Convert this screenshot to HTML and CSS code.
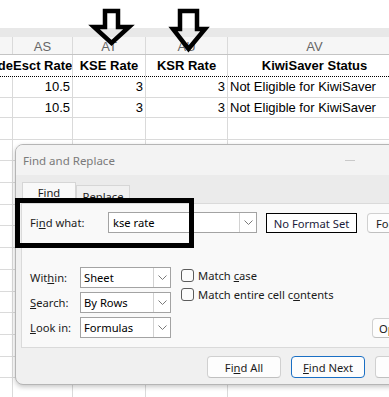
FILE: index.html
```html
<!DOCTYPE html>
<html lang="en">
<head>
    <meta charset="UTF-8">
    <meta name="viewport" content="width=device-width, initial-scale=1.0">
    <title>Find and Replace</title>
    <link rel="stylesheet" href="styles.css">
</head>
<body>
    <div class="sheet">
        <div class="band"></div>
        <div class="row letters">
            <span></span><span>AS</span><span>AT</span><span>AU</span><span>AV</span>
        </div>
        <div class="row head">
            <span class="right">de</span><span class="left">Esct Rate</span><span>KSE Rate</span><span>KSR Rate</span><span>KiwiSaver&nbsp;Status</span>
        </div>
        <div class="row data">
            <span></span><span class="num">10.5</span><span class="num">3</span><span class="num">3</span><span class="txt">Not Eligible for KiwiSaver</span>
        </div>
        <div class="row data">
            <span></span><span class="num">10.5</span><span class="num">3</span><span class="num">3</span><span class="txt">Not Eligible for KiwiSaver</span>
        </div>
        <div class="row empty"><span></span><span></span><span></span><span></span><span></span></div>
        <div class="row empty"><span></span><span></span><span></span><span></span><span></span></div>
        <div class="row empty"><span></span><span></span><span></span><span></span><span></span></div>
        <div class="row empty"><span></span><span></span><span></span><span></span><span></span></div>
        <div class="row empty"><span></span><span></span><span></span><span></span><span></span></div>
        <div class="row empty"><span></span><span></span><span></span><span></span><span></span></div>
        <div class="row empty"><span></span><span></span><span></span><span></span><span></span></div>
        <div class="row empty"><span></span><span></span><span></span><span></span><span></span></div>
        <div class="row empty"><span></span><span></span><span></span><span></span><span></span></div>
        <div class="row empty"><span></span><span></span><span></span><span></span><span></span></div>
        <div class="row empty"><span></span><span></span><span></span><span></span><span></span></div>
        <div class="row empty"><span></span><span></span><span></span><span></span><span></span></div>
        <div class="row empty"><span></span><span></span><span></span><span></span><span></span></div>
        <div class="row empty"><span></span><span></span><span></span><span></span><span></span></div>
    </div>

    <!-- hand drawn pointers over the header -->
    <svg class="arrows" width="389" height="60" viewBox="0 0 389 60">
        <path d="M105 11 H118 V27 H129 L111.5 43 L94 27 H105 Z" />
        <path d="M180 11 H197 V29 H205 L188.5 49 L173 29 H180 Z" />
    </svg>

    <div class="dialog">
        <div class="title">
            <span>Find and Replace</span>
            <span class="min"></span>
        </div>
        <div class="tabs">
            <span class="tab active">Find</span>
            <span class="tab">Replace</span>
        </div>
        <div class="panel">
            <div class="find-row">
                <label class="find-label">Fi<u>n</u>d what:</label>
                <div class="combo wide">
                    <span class="value">kse rate</span>
                    <span class="drop"><svg width="9" height="5" viewBox="0 0 9 5"><polyline points="0.5,0.5 4.5,4.5 8.5,0.5" /></svg></span>
                </div>
                <div class="format-box">No Format Set</div>
                <button class="btn format-btn">Format...</button>
            </div>
            <div class="options">
                <div class="selects">
                    <div class="opt-row">
                        <label>Wit<u>h</u>in:</label>
                        <div class="combo">
                            <span class="value">Sheet</span>
                            <span class="drop"><svg width="9" height="5" viewBox="0 0 9 5"><polyline points="0.5,0.5 4.5,4.5 8.5,0.5" /></svg></span>
                        </div>
                    </div>
                    <div class="opt-row">
                        <label><u>S</u>earch:</label>
                        <div class="combo">
                            <span class="value">By Rows</span>
                            <span class="drop"><svg width="9" height="5" viewBox="0 0 9 5"><polyline points="0.5,0.5 4.5,4.5 8.5,0.5" /></svg></span>
                        </div>
                    </div>
                    <div class="opt-row">
                        <label><u>L</u>ook in:</label>
                        <div class="combo">
                            <span class="value">Formulas</span>
                            <span class="drop"><svg width="9" height="5" viewBox="0 0 9 5"><polyline points="0.5,0.5 4.5,4.5 8.5,0.5" /></svg></span>
                        </div>
                    </div>
                </div>
                <div class="checks">
                    <div class="check"><span class="box"></span><span>Match <u>c</u>ase</span></div>
                    <div class="check"><span class="box"></span><span>Match entire cell c<u>o</u>ntents</span></div>
                </div>
                <div class="opt-btn">
                    <button class="btn">Options &lt;&lt;</button>
                </div>
            </div>
        </div>
        <div class="footer">
            <button class="btn">Fi<u>n</u>d All</button>
            <button class="btn primary"><u>F</u>ind Next</button>
            <button class="btn">Close</button>
        </div>
    </div>

    <div class="callout"></div>
</body>
</html>
```

FILE: styles.css
```css
body {
    margin: 0;
    width: 389px;
    height: 397px;
    overflow: hidden;
    position: relative;
    background-color: #ffffff;
    font-family: "Liberation Sans", Arial, sans-serif;
}
.sheet {
    padding-top: 28px;
}
.band {
    height: 9px;
    background-color: #e8e8e8;
}
.row {
    display: grid;
    grid-template-columns: 13px 60px 73px 82px 174px;
    box-sizing: border-box;
    border-bottom: 1px solid #dadada;
    font-size: 13px;
    color: #000;
}
.row span {
    border-right: 1px solid #dadada;
    white-space: nowrap;
    overflow: hidden;
    display: flex;
    align-items: center;
}
.letters {
    height: 18px;
    background-color: #f6f6f6;
    border-bottom-color: #c4c4c4;
    color: #666;
}
.letters span {
    justify-content: center;
    padding-top: 1px;
}
.head {
    height: 22px;
    font-weight: bold;
    border-bottom: 1px dotted #000;
}
.head span {
    justify-content: center;
}
.head span.right {
    justify-content: flex-end;
    border-right: none;
}
.head span.left {
    justify-content: flex-start;
}
.data {
    height: 20.5px;
}
.data .num {
    justify-content: flex-end;
    padding-right: 2px;
}
.data .txt {
    padding-left: 2px;
}
.empty {
    height: 21.7px;
}
.arrows {
    position: absolute;
    left: 0;
    top: 0;
}
.arrows path {
    fill: none;
    stroke: #000;
    stroke-width: 4.5;
    stroke-linejoin: miter;
}

/* dialog */
.dialog {
    position: absolute;
    left: 15px;
    top: 144px;
    width: 440px;
    height: 241px;
    box-sizing: border-box;
    background-color: #f0f0f0;
    border: 1px solid #b5b5b5;
    border-radius: 8px;
    box-shadow: 0 2px 5px rgba(0, 0, 0, 0.22);
    overflow: hidden;
    font-family: "Noto Sans", "Open Sans", sans-serif;
    font-size: 11.2px;
    color: #1b1b1b;
}
.title {
    height: 30px;
    background-color: #f3f3f3;
    display: flex;
    align-items: center;
    justify-content: space-between;
    padding: 0 99px 0 7px;
    color: #7a7a7a;
    font-size: 11.5px;
}
.min {
    width: 10px;
    height: 1px;
    background-color: #c9c9c9;
}
.tabs {
    height: 28px;
    display: flex;
    align-items: flex-end;
    padding-left: 6px;
    background-color: #ebebeb;
}
.tab {
    box-sizing: border-box;
    height: 18px;
    width: 54px;
    text-align: center;
    border: 1px solid #d6d6d6;
    border-bottom: none;
    background-color: #f0f0f0;
    line-height: 22px;
    overflow: hidden;
}
.tab.active {
    height: 21px;
    background-color: #f9f9f9;
    line-height: 20px;
}
.panel {
    height: 145px;
    margin: 0 6px 0 5px;
    box-sizing: border-box;
    background-color: #f9f9f9;
    border: 1px solid #dadada;
    padding: 7px 0 0 8px;
}
.find-row {
    display: flex;
    align-items: center;
}
.find-row > *,
.options > *,
.opt-row > * {
    flex-shrink: 0;
}
.find-label {
    width: 78px;
}
.combo {
    box-sizing: border-box;
    width: 91px;
    height: 21px;
    display: flex;
    align-items: stretch;
    background-color: #ffffff;
    border: 1px solid #a3a3a3;
}
.combo.wide {
    width: 149px;
}
.combo .value {
    flex: 1;
    padding-left: 3px;
    display: flex;
    align-items: center;
    color: #000;
}
.combo.wide .value {
    padding-left: 4px;
}
.drop {
    width: 16px;
    border-left: 1px solid #d2d2d2;
    display: flex;
    align-items: center;
    justify-content: center;
}
.drop polyline {
    fill: none;
    stroke: #7a7a7a;
    stroke-width: 1;
}
.format-box {
    box-sizing: border-box;
    margin-left: 9px;
    width: 91px;
    height: 20px;
    margin-top: 2px;
    border: 1px solid #000;
    background-color: #ffffff;
    color: #1a1a3a;
    display: flex;
    align-items: center;
    justify-content: center;
}
.btn {
    box-sizing: border-box;
    width: 74px;
    height: 22px;
    padding: 0;
    font-family: inherit;
    font-size: 11.2px;
    color: #1b1b1b;
    background-color: #fdfdfd;
    border: 1px solid #d0d0d0;
    border-bottom-color: #c0c0c0;
    border-radius: 4px;
}
.format-btn {
    margin-left: 10px;
    margin-top: 2px;
    height: 20px;
    text-align: left;
    padding-left: 8px;
}
.options {
    margin-top: 34px;
    display: flex;
}
.selects {
    display: flex;
    flex-direction: column;
    gap: 4px;
}
.opt-row {
    display: flex;
    align-items: center;
}
.opt-row label {
    width: 50px;
}
.checks {
    margin-left: 10px;
    width: 191px;
    padding-top: 2px;
    display: flex;
    flex-direction: column;
    gap: 7px;
}
.check {
    display: flex;
    align-items: center;
    height: 12px;
}
.box {
    box-sizing: border-box;
    width: 13px;
    height: 13px;
    margin-right: 4px;
    border: 1px solid #5c5c5c;
    border-radius: 3px;
    background-color: #fbfbfb;
}
.opt-btn {
    display: flex;
    align-items: flex-end;
}
.opt-btn .btn {
    height: 20px;
    text-align: left;
    padding-left: 6px;
}
.footer {
    display: flex;
    gap: 10px;
    padding: 8px 0 0 191px;
}
.btn.primary {
    border-color: #1a6fc4;
}
.callout {
    position: absolute;
    left: 15px;
    top: 198px;
    width: 179px;
    height: 50px;
    box-sizing: border-box;
    border: 5px solid #000;
}
```
